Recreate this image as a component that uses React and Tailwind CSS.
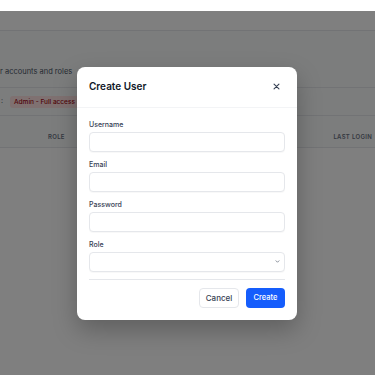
import React from "react";

function Field({ label, select }) {
  return (
    <div className="flex flex-col">
      <label className="text-[7px] leading-[10px] font-medium text-gray-700 mb-[2px]">{label}</label>
      <div className="relative h-[20px] rounded-[4px] border border-gray-200 bg-white shadow-[0_1px_1px_rgba(0,0,0,0.03)] flex items-center justify-end pr-[4px]">
        {select && (
          <svg width="5" height="5" viewBox="0 0 10 10" fill="none" stroke="#6b7280" strokeWidth="1.6" strokeLinecap="round" strokeLinejoin="round">
            <path d="M2 3.5 L5 6.5 L8 3.5" />
          </svg>
        )}
      </div>
    </div>
  );
}

export default function App() {
  return (
    <div className="relative w-[375px] h-[375px] overflow-hidden bg-gray-50" style={{ fontFamily: "Inter, 'Noto Sans', sans-serif" }}>
      {/* background page */}
      <div className="flex flex-col h-full">
        <div className="h-[11px] bg-white shrink-0" />
        <div className="h-[20px] border-b border-gray-200 bg-white shrink-0" />
        <div className="h-[57px] border-b border-gray-200 flex items-end pb-[12px] shrink-0">
          <span className="text-[7.5px] text-gray-600 leading-none">r accounts and roles</span>
        </div>
        <div className="h-[28px] border-b border-gray-200 flex items-center gap-[7px] shrink-0">
          <span className="text-[7px] text-gray-600 pl-[1px]">:</span>
          <span className="bg-red-100 text-red-800 text-[6.5px] font-medium rounded-[3px] px-[4px] py-[2px] leading-[8px]">Admin - Full access</span>
        </div>
        <div className="h-[32px] border-b border-gray-200 flex items-end pb-[6px] shrink-0 bg-gray-50">
          <span className="text-[6px] font-semibold tracking-wider text-gray-500 ml-[48px]">ROLE</span>
          <span className="text-[6px] font-semibold tracking-wider text-gray-500 ml-auto mr-[3px]">LAST LOGIN</span>
        </div>
        <div className="flex-1 bg-white" />
      </div>

      {/* overlay */}
      <div className="absolute left-0 right-0 top-[11px] bottom-0 bg-black/50 flex items-center justify-center pr-[1px]">
        <div className="w-[220px] bg-white rounded-[8px] shadow-[0_10px_25px_rgba(0,0,0,0.25)] flex flex-col">
          <div className="h-[41px] border-b border-gray-100 flex items-center justify-between px-[12px]">
            <h2 className="text-[10px] font-semibold text-gray-900">Create User</h2>
            <button className="w-[18px] h-[18px] flex items-center justify-center text-gray-700">
              <svg width="7" height="7" viewBox="0 0 10 10" fill="none" stroke="currentColor" strokeWidth="1.6" strokeLinecap="round">
                <path d="M1.5 1.5 L8.5 8.5 M8.5 1.5 L1.5 8.5" />
              </svg>
            </button>
          </div>
          <div className="px-[12px] pt-[12px] pb-[12px] flex flex-col">
            <div className="flex flex-col gap-[8px]">
              <Field label="Username" />
              <Field label="Email" />
              <Field label="Password" />
              <Field label="Role" select />
            </div>
            <div className="mt-[7px] border-t border-gray-200 pt-[8px] flex justify-end gap-[7px]">
              <button className="h-[20px] w-[40px] rounded-[4px] border border-gray-200 bg-white text-[8px] font-medium text-gray-700">Cancel</button>
              <button className="h-[20px] w-[39px] rounded-[4px] bg-blue-600 text-[7.5px] font-medium text-white">Create</button>
            </div>
          </div>
        </div>
      </div>
    </div>
  );
}
